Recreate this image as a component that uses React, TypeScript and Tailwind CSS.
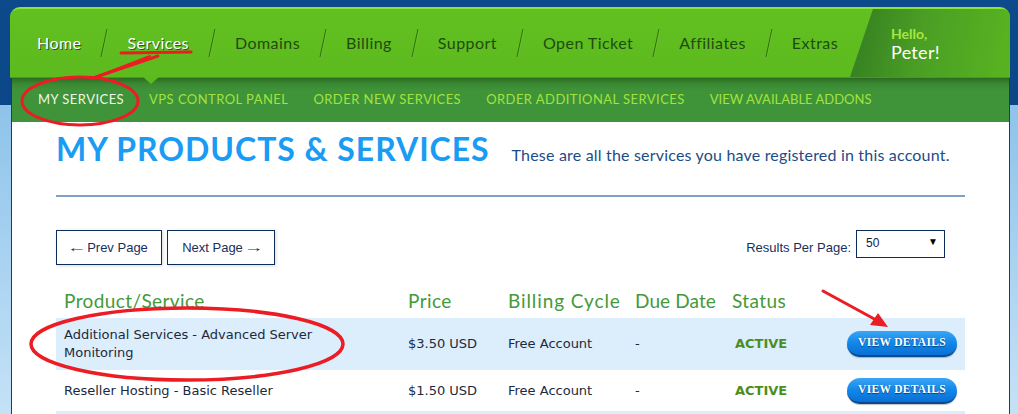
import React from "react";

const navItems = ["Home", "Services", "Domains", "Billing", "Support", "Open Ticket", "Affiliates", "Extras"];
const subItems = ["MY SERVICES", "VPS CONTROL PANEL", "ORDER NEW SERVICES", "ORDER ADDITIONAL SERVICES", "VIEW AVAILABLE ADDONS"];

function Slash() {
  return (
    <svg width="8" height="30" viewBox="0 0 8 30" className="shrink-0">
      <line x1="7" y1="1" x2="1" y2="29" stroke="#2f6a16" strokeWidth="1" />
      <line x1="8" y1="1" x2="2" y2="29" stroke="#7fd43a" strokeWidth="0.6" opacity="0.5" />
    </svg>
  );
}

function ViewDetails() {
  return (
    <button className="h-[26px] w-[110px] rounded-full bg-[linear-gradient(to_bottom,#3aa6f4_0%,#1187ea_50%,#0a6fd4_100%)] border-b-2 border-[#08498f] shadow-[0_1px_1px_rgba(0,0,0,0.25)] text-white font-bold text-[11.5px] tracking-[0.3px] [font-family:'Liberation_Serif',serif] [text-shadow:0_1px_1px_#08407d]">
      VIEW DETAILS
    </button>
  );
}

export default function App() {
  return (
    <div className="relative w-[1018px] h-[414px] overflow-hidden bg-[linear-gradient(to_bottom,#0c4a8c_0px,#0b4788_105px,#8ec3ea_105px,#c4e2f7_414px)] [font-family:Lato,'Open_Sans',sans-serif]">
      <div className="pl-[10px] pt-[7px] w-[1010px]">
        {/* main nav */}
        <nav className="relative h-[71px] rounded-t-[10px] bg-[linear-gradient(to_bottom,#62c020_0%,#5dba1f_100%)] border-t-2 border-[#8fe23a] border-b border-b-[#4a9a18] flex items-center pl-[27px]">
          <div className="flex items-center gap-[19px] text-[16px] tracking-[0.45px]">
            {navItems.map((item, i) => (
              <React.Fragment key={item}>
                {i > 0 && <Slash />}
                <span
                  className={
                    i < 2
                      ? "text-white [text-shadow:1px_1px_0_#2b5c12]"
                      : "text-[#1f4b12]"
                  }
                >
                  {item}
                </span>
              </React.Fragment>
            ))}
          </div>
          <div className="ml-auto self-stretch w-[160px] rounded-tr-[8px] [clip-path:polygon(23px_0,100%_0,100%_100%,0_100%)] bg-[linear-gradient(100deg,#347c22_0%,#4a9f24_45%,#59b420_100%)] flex flex-col justify-center pl-[41px]">
            <span className="text-[14px] font-bold leading-[17px] text-[#a8e640]">Hello,</span>
            <span className="text-[18px] leading-[20px] text-white tracking-[0.3px]">Peter!</span>
          </div>
          <div className="absolute left-[133px] top-full z-10 w-0 h-0 border-x-[8px] border-x-transparent border-t-[7px] border-t-[#5aba1f]" />
        </nav>

        {/* page body */}
        <div className="ml-[1px] w-[999px] border-x border-[#0d3f7a] bg-white">
          <div className="h-[44px] bg-[linear-gradient(to_bottom,#2c6b21_0px,#3a8a33_6px,#3f9338_12px,#3f9338_100%)] flex items-center pl-[26px] gap-[25px] text-[13px] tracking-[0.45px]">
            {subItems.map((s, i) => (
              <span
                key={s}
                className={
                  i === 0
                    ? "text-[#eef7e8]"
                    : i === 4
                    ? "text-[#a2e33e] tracking-[0px]"
                    : "text-[#a2e33e]"
                }
              >
                {s}
              </span>
            ))}
          </div>

          <div className="px-[44px] pt-[11px]">
            <div className="flex items-baseline gap-[22px]">
              <h1 className="text-[32px] leading-none font-bold text-[#1a9bf4] tracking-[0.95px]">MY PRODUCTS &amp; SERVICES</h1>
              <p className="text-[16px] text-[#1d4c85] tracking-[0.19px]">These are all the services you have registered in this account.</p>
            </div>
            <div className="mt-[28px] h-[2px] bg-[#7fa1c4]" />

            <div className="mt-[33px] flex items-start justify-between [font-family:'Liberation_Sans',Arial,sans-serif] text-[13px] text-[#1a2f5c]">
              <div className="flex gap-[5px]">
                <button className="h-[35px] w-[106px] border border-[#0c2c5a] bg-white shadow-[1px_1px_3px_rgba(0,0,0,0.15)]">
                  <span className="inline-block scale-x-150 mr-[4px]">←</span>Prev Page
                </button>
                <button className="h-[35px] w-[108px] border border-[#0c2c5a] bg-white shadow-[1px_1px_3px_rgba(0,0,0,0.15)]">
                  Next Page<span className="inline-block scale-x-150 ml-[4px]">→</span>
                </button>
              </div>
              <div className="flex items-center gap-[5px] mr-[20px]">
                <span className="pt-[8px]">Results Per Page:</span>
                <div className="h-[28px] w-[89px] border border-[#0c2c5a] flex items-start justify-between pl-[9px] pr-[6px] pt-[3px] text-[12px] text-[#102040]">
                  <span>50</span>
                  <span className="text-[10px] text-black">▼</span>
                </div>
              </div>
            </div>

            {/* table */}
            <div className="mt-[20px]">
              <div className="grid grid-cols-[344px_100px_127px_97px_1fr] h-[33px] items-center text-[19px] tracking-[0.4px] text-[#44993a]">
                <div className="pl-[8px]">Product/Service</div>
                <div className="pl-[8px]">Price</div>
                <div className="pl-[8px] tracking-[0.9px]">Billing Cycle</div>
                <div className="pl-[8px] tracking-[0.1px]">Due Date</div>
                <div className="pl-[8px]">Status</div>
              </div>
              <div className="[font-family:'DejaVu_Sans',Verdana,sans-serif] text-[13px] text-[#1c2a3c]">
                <div className="grid grid-cols-[344px_100px_127px_97px_1fr] h-[52px] items-center bg-[#dcedfc]">
                  <div className="pl-[8px] leading-[18px]">Additional Services - Advanced Server<br />Monitoring</div>
                  <div className="pl-[8px]">$3.50 USD</div>
                  <div className="pl-[8px]">Free Account</div>
                  <div className="pl-[8px]">-</div>
                  <div className="pl-[11px] flex items-center justify-between pr-[8px]">
                    <span className="font-bold text-[#4a8e1f]">ACTIVE</span>
                    <ViewDetails />
                  </div>
                </div>
                <div className="grid grid-cols-[344px_100px_127px_97px_1fr] h-[41px] items-center bg-white">
                  <div className="pl-[8px]">Reseller Hosting - Basic Reseller</div>
                  <div className="pl-[8px]">$1.50 USD</div>
                  <div className="pl-[8px]">Free Account</div>
                  <div className="pl-[8px]">-</div>
                  <div className="pl-[11px] flex items-center justify-between pr-[8px]">
                    <span className="font-bold text-[#4a8e1f]">ACTIVE</span>
                    <ViewDetails />
                  </div>
                </div>
                <div className="h-[40px] bg-[#dcedfc]" />
              </div>
            </div>
          </div>
        </div>
      </div>

      {/* red annotations */}
      <svg className="absolute inset-0 pointer-events-none" width="1018" height="414" viewBox="0 0 1018 414">
        <g stroke="#ec1c24" fill="none" strokeLinecap="round">
          <path d="M121 53 L191 52" strokeWidth="3" />
          <path d="M158 56 L93 78" strokeWidth="3" />
          <path d="M150 56 L93 78" strokeWidth="2" />
          <ellipse cx="80" cy="101" rx="58" ry="24" strokeWidth="3" />
          <ellipse cx="187" cy="344" rx="156" ry="36" strokeWidth="3.5" />
          <path d="M823 291 L878 321" strokeWidth="3" />
        </g>
        <polygon points="888,327 870,325 878,313" fill="#ec1c24" />
      </svg>
    </div>
  );
}
